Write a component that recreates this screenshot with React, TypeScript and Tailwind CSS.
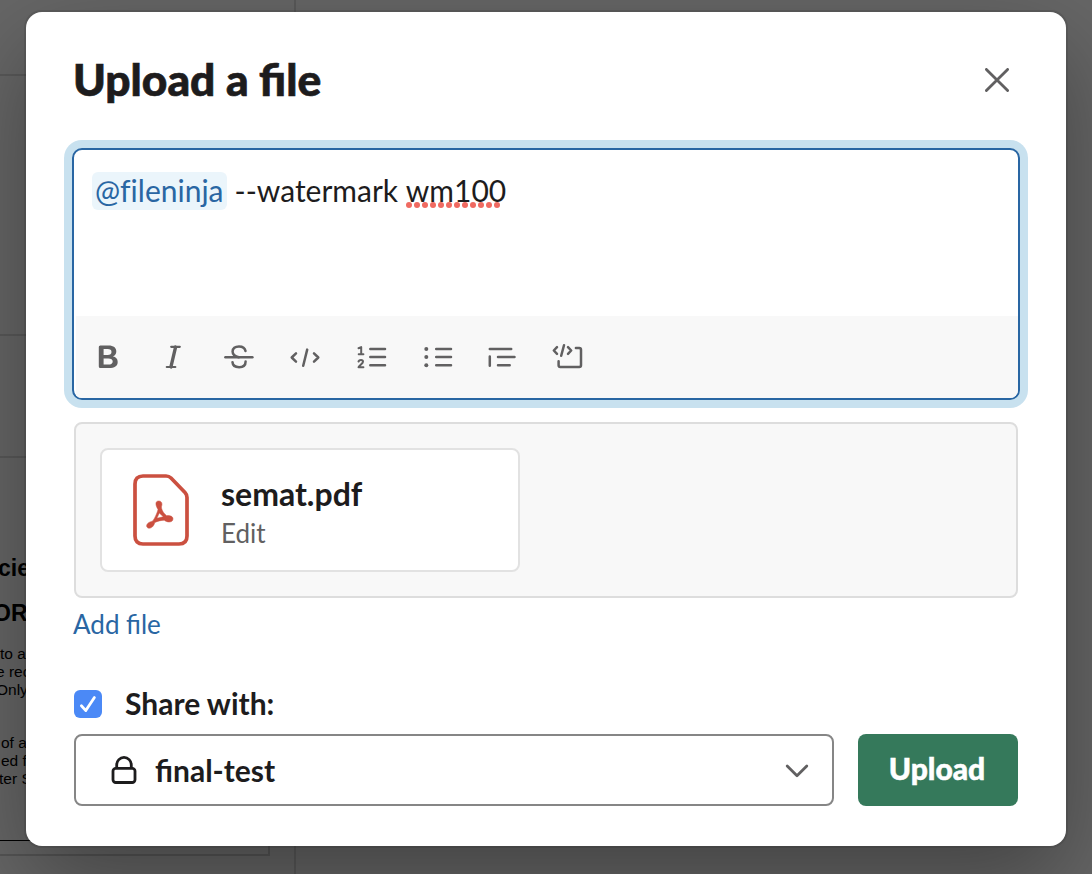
import type { ReactNode } from 'react';

function ToolButton({ label, children }: { label: string; children: ReactNode }) {
  return (
    <button aria-label={label} className="h-[82px] w-[66px] shrink-0 text-[#616061]">
      <svg
        viewBox="0 0 66 82"
        className="block h-full w-full"
        fill="none"
        stroke="currentColor"
        strokeWidth="2.5"
        strokeLinecap="round"
        strokeLinejoin="round"
      >
        {children}
      </svg>
    </button>
  );
}

function Toolbar() {
  return (
    <div className="ml-[2px] flex bg-[#f8f8f8] pr-2 [&>button:first-child]:-ml-px">
      <ToolButton label="Bold">
        <path
          fill="currentColor"
          stroke="none"
          fillRule="evenodd"
          d="M25.3 29.6H33.5C38.6 29.6 41.3 31.8 41.3 35.4C41.3 37.9 40 39.6 37.8 40.3C40.9 40.9 42.7 43 42.7 45.9C42.7 49.9 39.5 52 34 52H25.3Q23.8 52 23.8 50.5V31.1Q23.8 29.6 25.3 29.6ZM28.6 33.1V39H32.6C35.2 39 36.5 38 36.5 36C36.5 34 35.2 33.1 32.6 33.1ZM28.6 42.4V48.5H33.2C36.2 48.5 37.7 47.5 37.7 45.4C37.7 43.3 36.2 42.4 33.2 42.4Z"
        />
      </ToolButton>
      <ToolButton label="Italic">
        <path d="M30.2 30.8H38.8M25.8 51H34.3" strokeWidth="2.2" />
        <path d="M34.6 31L29.9 51" strokeWidth="3.3" />
      </ToolButton>
      <ToolButton label="Strikethrough">
        <path d="M18.4 41.2H45.4" />
        <path d="M38.5 35C38 32 35.6 30.4 32 30.4C28 30.4 25.6 32.5 25.6 35.5C25.6 38.5 27.8 40.4 31.8 41.2M25.5 46.2C25.7 49.5 28.2 51.2 32.1 51.2C36.2 51.2 38.6 49.2 38.6 45.5" />
      </ToolButton>
      <ToolButton label="Code">
        <path d="M23 37.3L18.7 41.5L23 45.7M41 37.3L45.3 41.5L41 45.7M34.2 33.6L30.2 49.8" />
      </ToolButton>
      <ToolButton label="Ordered list">
        <path d="M31.3 33H46M31.3 41.1H46M31.3 49.2H46" />
        <path d="M19.5 32.2L22.2 31.1V38.2M19.7 38.3H24.4M19.5 45.5C20 44.3 21 44 22 44C23.2 44 24 44.8 24 45.8C24 47.5 20.8 49.2 19.5 51.2H24.4" strokeWidth="2" />
      </ToolButton>
      <ToolButton label="Bulleted list">
        <path d="M31.2 33H46M31.2 41.1H46M31.2 49.2H46" />
        <g fill="currentColor" stroke="none">
          <circle cx="21.3" cy="33" r="2" />
          <circle cx="21.3" cy="41.1" r="2" />
          <circle cx="21.3" cy="49.2" r="2" />
        </g>
      </ToolButton>
      <ToolButton label="Blockquote">
        <path d="M18.8 33H40.2M27 41.1H43.5M27 49.2H38.7M18.8 40.5V49.8" />
      </ToolButton>
      <ToolButton label="Code block">
        <path d="M20 31.2L16.8 34.5L20 37.8M31 31.2L34.2 34.5L31 37.8M27 29.2L24.2 39.8M38.9 32H42.3Q44 32 44 33.7V49.2Q44 50.9 42.3 50.9H23.3Q21.6 50.9 21.6 49.2V45.2" />
      </ToolButton>
    </div>
  );
}

function Backdrop() {
  return (
    <div className="absolute inset-0 overflow-hidden bg-[#666] text-black [font-family:'Liberation_Sans',Arial,sans-serif]">
      <div className="flex h-full w-[296px] flex-col border-r-2 border-[#595959]">
        <div className="h-[76px] shrink-0 border-b-2 border-[#595959]" />
        <div className="h-[260px] shrink-0 border-b-2 border-[#595959]" />
        <div className="h-[122px] shrink-0 border-b-2 border-[#595959]" />
        <div className="h-[398px] w-[270px] shrink-0 overflow-hidden whitespace-nowrap border-r-2 border-b-2 border-[#555] text-[15.5px] leading-[18px]">
          <p className="-ml-[2px] mt-[96px] text-[23px] font-bold leading-[28px]">cie</p>
          <p className="-ml-[7px] mt-[17px] text-[23px] font-bold leading-[28px]">OR</p>
          <p className="mt-[18px]">to a</p>
          <p className="-ml-[4px]">e rec</p>
          <p className="-ml-[4px]">Only</p>
          <p className="mt-[35px] ml-[1px]">of a</p>
          <p className="ml-[1px]">ed f</p>
          <p className="-ml-[1px]">ter S</p>
          <div className="mt-[52px] border-t border-black" />
        </div>
      </div>
    </div>
  );
}

export default function App() {
  return (
    <div className="relative h-[874px] w-[1092px] overflow-hidden text-[#1d1c1d] [font-family:Lato,sans-serif]">
      <Backdrop />
      <div className="relative mx-[26px] mt-3 h-[834px] rounded-2xl bg-white px-12 shadow-[0_0_0_2px_rgba(29,28,29,0.13),0_36px_96px_0_rgba(0,0,0,0.35)]">
        <header className="flex h-[136px] items-center justify-between">
          <h1 className="-ml-px pb-[2px] text-[44.3px] font-black leading-[56px] [-webkit-text-stroke:0.7px_#1d1c1d]">Upload a file</h1>
          <button aria-label="Close" className="mr-[9px] text-[#616061]">
            <svg viewBox="0 0 24 24" className="block size-6" fill="none" stroke="currentColor" strokeWidth="2.8" strokeLinecap="round">
              <path d="M1.4 1.4L22.6 22.6M22.6 1.4L1.4 22.6" />
            </svg>
          </button>
        </header>

        <section className="-mx-[2px] h-[252px] overflow-visible rounded-[10px] border-2 border-[#2966a3] bg-white shadow-[0_0_0_8px_#c8e1ef]">
          <div className="flex h-[166px] items-start overflow-hidden px-[18px] pt-[22px] text-[30px]">
            <span className="h-[38px] rounded-md bg-[#ebf5fb] px-[3px] leading-[36px] text-[#2966a3] [font-variant-ligatures:none]">@fileninja</span>
            <span className="ml-2 whitespace-pre leading-[36px]">--watermark </span>
            <span className="relative leading-[36px]">
              wm100
              <svg viewBox="0 0 96 6" className="absolute top-[30px] left-0 h-[6px] w-[96px]" fill="#f06a61">
                {Array.from({ length: 12 }, (_, i) => (
                  <circle key={i} cx={3 + i * 8} cy="3" r="3" />
                ))}
              </svg>
            </span>
          </div>
          <div className="overflow-hidden rounded-b-[8px]">
            <Toolbar />
          </div>
        </section>

        <section className="mt-[22px] h-[176px] rounded-lg border-2 border-[#dddddd] bg-[#f8f8f8] p-6">
          <div className="flex h-[124px] w-[420px] rounded-lg border-2 border-[#e2e2e2] bg-white pl-[31px]">
            <svg viewBox="0 0 56 72" className="mt-6 h-[72px] w-[56px] shrink-0" fill="none" stroke="#cb5040" strokeWidth="3.7" strokeLinejoin="round">
              <path d="M10 2H33Q36 2 38 4L52 18.5Q54 20.5 54 23.5V62Q54 70 46 70H10Q2 70 2 62V10Q2 2 10 2Z" />
              <g fill="#cb5040" stroke="#cb5040" strokeWidth="0.5">
                <path
                  fillRule="evenodd"
                  d="M25.7 27C28.7 27 29.6 29.5 28.5 32.5C28 35.5 31.2 40 33.7 41.7C36.7 41.2 40 42.3 40 44.8C40 48.8 34 48.7 31.3 46.2C28.5 46.2 24.3 47.1 21.8 48.6C20.8 52.5 18.2 54.5 15.7 54.2C12.5 53.4 13.1 49.7 16.5 48.2C18.2 47.5 19.1 47.3 20 46.7C22 43.8 24.5 38.2 25 35.4C22.8 32.2 21.5 27 25.7 27ZM26.3 39L23.9 44.3L30.3 42.8Z"
                />
              </g>
            </svg>
            <div className="ml-8 pt-[25px]">
              <p className="text-[32px] font-bold leading-[38px]">semat.pdf</p>
              <p className="mt-[2px] text-[26px] leading-[36px] text-[#616061]">Edit</p>
            </div>
          </div>
        </section>

        <button className="-ml-px mt-[8px] block text-[26px] leading-[36px] text-[#2966a3]">Add file</button>

        <label className="mt-[43px] flex h-[38px] items-center">
          <svg viewBox="0 0 28 28" className="size-7">
            <rect width="28" height="28" rx="6" fill="#4b89f6" />
            <path d="M7.4 15.8L11.8 20.6L20.4 7.6" fill="none" stroke="#fff" strokeWidth="2.8" strokeLinecap="round" strokeLinejoin="round" />
          </svg>
          <span className="ml-[23px] pb-[2px] text-[30px] font-bold leading-[36px]">Share with:</span>
        </label>

        <div className="mt-[11px] flex h-[72px] gap-6">
          <button className="flex w-[760px] items-center rounded-lg border-2 border-[#868686] bg-white pr-[23px] pl-[35px]">
            <svg viewBox="0 0 26 28" className="h-7 w-[26px]" fill="none" stroke="#1d1c1d" strokeWidth="2.8" strokeLinejoin="round">
              <rect x="2" y="12.3" width="22" height="14.2" rx="2.8" />
              <path d="M5.7 12V9A7.3 7.6 0 0 1 20.3 9V12" />
            </svg>
            <span className="ml-[18px] text-[30px] font-bold">final-test</span>
            <svg viewBox="0 0 24 14" className="mt-[2px] ml-auto h-[14px] w-6" fill="none" stroke="#616061" strokeWidth="2.8" strokeLinecap="round" strokeLinejoin="round">
              <path d="M2.2 2L12 11.8L21.8 2" />
            </svg>
          </button>
          <button className="w-[160px] rounded-lg bg-[#35795b] pr-[2px] pb-1 text-[30px] font-black text-white [-webkit-text-stroke:0.5px_#fff]">Upload</button>
        </div>
      </div>
    </div>
  );
}
